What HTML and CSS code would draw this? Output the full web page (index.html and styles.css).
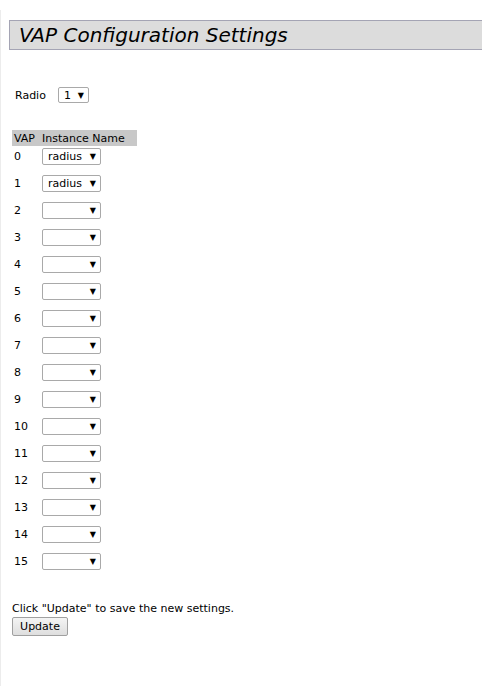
FILE: index.html
```html
<!DOCTYPE html>
<html lang="en">
<head>
    <meta charset="UTF-8">
    <title>VAP Configuration Settings</title>
    <link rel="stylesheet" href="styles.css">
</head>
<body>
    <div class="frame">
        <h1 class="page-title">VAP Configuration Settings</h1>

        <div class="radio-row">
            <span class="label">Radio</span>
            <span class="select select-small"><span class="val">1</span><span class="arrow">&#9660;</span></span>
        </div>

        <table class="vap-table">
            <thead>
                <tr>
                    <th>VAP</th>
                    <th>Instance Name</th>
                </tr>
            </thead>
            <tbody id="rows"></tbody>
        </table>

        <p class="hint">Click "Update" to save the new settings.</p>
        <button class="btn">Update</button>
    </div>

    <script>
        // Build the 16 VAP rows
        var rows = document.getElementById('rows');
        for (var i = 0; i < 16; i++) {
            var name = i < 2 ? 'radius' : '';
            var tr = document.createElement('tr');
            tr.innerHTML = '<td class="num">' + i + '</td>' +
                '<td><div class="select select-wide"><span class="val">' + name + '</span><span class="arrow">&#9660;</span></div></td>';
            rows.appendChild(tr);
        }
    </script>
</body>
</html>
```

FILE: styles.css
```css
body {
    margin: 0;
    padding: 0;
    background: #fff;
    font-family: "DejaVu Sans", Verdana, sans-serif;
    font-size: 11px;
    color: #000;
}

.frame {
    margin-top: 10px;
    border-left: 1px solid #ececec;
    min-height: 676px;
    padding-top: 10px;
}

.page-title {
    margin: 0 0 0 8px;
    height: 28px;
    padding-left: 9px;
    background: #dcdcdc;
    border-top: 1px solid #a4a4b4;
    border-bottom: 1px solid #a4a4b4;
    border-left: 1px solid #a4a4b4;
    font-size: 20px;
    font-style: italic;
    font-weight: normal;
    line-height: 29px;
}

.radio-row {
    display: flex;
    align-items: center;
    margin: 37px 0 0 14px;
    height: 16px;
}

.radio-row .label {
    margin-right: 12px;
}

.select {
    display: flex;
    align-items: center;
    justify-content: space-between;
    box-sizing: border-box;
    height: 17px;
    border: 1px solid #a9a9a9;
    border-radius: 2px;
    background: #fff;
    padding: 0 4px 0 5px;
    color: #000;
}

.select-small {
    width: 31px;
    height: 16px;
}

.select-wide {
    width: 59px;
}

.arrow {
    font-size: 8px;
}

.vap-table {
    margin: 27px 0 0 11px;
    border-collapse: collapse;
}

.vap-table th {
    background: #c8c8c8;
    font-weight: normal;
    text-align: left;
    padding: 0 2px;
    height: 16px;
}

.vap-table th:last-child {
    padding-right: 12px;
}

.vap-table td {
    height: 27px;
    padding: 2px 2px 0;
    vertical-align: top;
    line-height: 17px;
    box-sizing: border-box;
}

.vap-table td.num {
    width: 28px;
}

.hint {
    margin: 24px 0 2px 11px;
}

.btn {
    margin-left: 11px;
    height: 19px;
    width: 56px;
    font-family: "DejaVu Sans", Verdana, sans-serif;
    font-size: 11px;
    padding: 0;
    border: 1px solid #a0a0a0;
    border-radius: 2px;
    background: linear-gradient(#f4f4f4, #dedede);
}
```
